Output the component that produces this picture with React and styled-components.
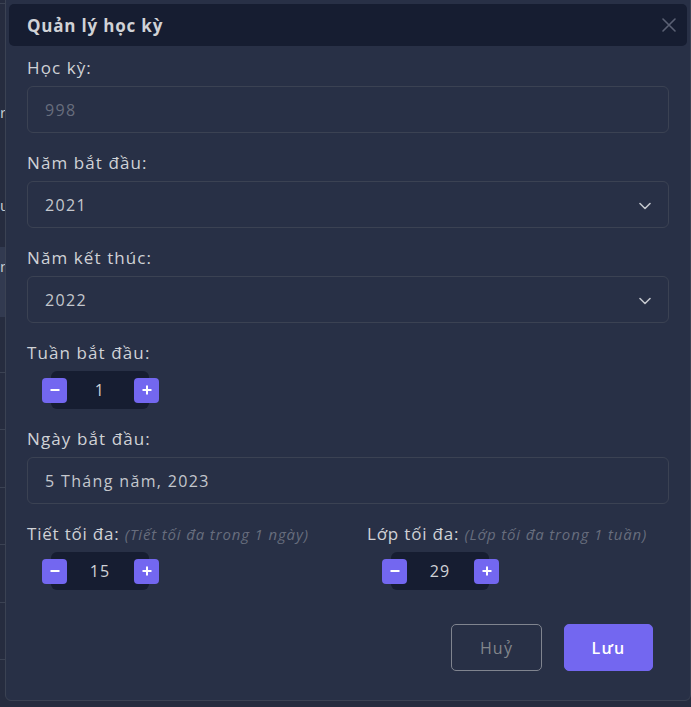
import React, { useState } from 'react';
import styled, { createGlobalStyle } from 'styled-components';

const GlobalStyle = createGlobalStyle`
  html, body {
    margin: 0;
    padding: 0;
    background: #262c3f;
    font-family: "Open Sans", "Liberation Sans", sans-serif;
    overflow: hidden;
  }
  * { box-sizing: border-box; }
`;

// rows of the page that sits behind the dialog (only a sliver shows on the left)
const bgRows = [
  { h: 4, line: true },
  { h: 87 },
  { h: 42, text: 'r' },
  { h: 51 },
  { h: 42, text: 'ư' },
  { h: 21 },
  { h: 70, hl: true, text: 'n', top: true },
  { h: 56, line: true },
  { h: 57, line: true },
  { h: 58, line: true },
  { h: 57, line: true },
  { h: 58, line: true },
  { h: 57, line: true },
];

export default function App() {
  const [week, setWeek] = useState(1);
  const [periods, setPeriods] = useState(15);
  const [classes, setClasses] = useState(29);

  return (<>
    <GlobalStyle />
    <Page>
      {bgRows.map((r, i) => (
        <BgRow key={i} $h={r.h} $hl={r.hl} $line={r.line} $top={r.top}>
          {r.text && <BgCell>{r.text}</BgCell>}
        </BgRow>
      ))}
    </Page>

    <Modal>
      <Header>
        <Title>Quản lý học kỳ</Title>
        <Close aria-label="close">
          <svg width="14" height="14" viewBox="0 0 14 14">
            <path d="M1 1L13 13M13 1L1 13" stroke="#5b6174" strokeWidth="1.6" strokeLinecap="round" />
          </svg>
        </Close>
      </Header>

      <Body>
        <Field>
          <Label>Học kỳ:</Label>
          <Box $muted>998</Box>
        </Field>

        <Field>
          <Label>Năm bắt đầu:</Label>
          <Box>
            2021
            <Chevron />
          </Box>
        </Field>

        <Field>
          <Label>Năm kết thúc:</Label>
          <Box>
            2022
            <Chevron />
          </Box>
        </Field>

        <Field>
          <Label>Tuần bắt đầu:</Label>
          <Stepper value={week} onChange={setWeek} />
        </Field>

        <Field>
          <Label>Ngày bắt đầu:</Label>
          <Box>5 Tháng năm, 2023</Box>
        </Field>

        <Columns>
          <Field>
            <Label $tight>Tiết tối đa: <Hint>(Tiết tối đa trong 1 ngày)</Hint></Label>
            <Stepper value={periods} onChange={setPeriods} />
          </Field>
          <Field>
            <Label $tight>Lớp tối đa: <Hint>(Lớp tối đa trong 1 tuần)</Hint></Label>
            <Stepper value={classes} onChange={setClasses} />
          </Field>
        </Columns>

        <Footer>
          <Button $outline>Huỷ</Button>
          <Button>Lưu</Button>
        </Footer>
      </Body>
    </Modal>
  </>
  );
};

function Chevron() {
  return (
    <ChevronIcon width="12" height="8" viewBox="0 0 12 8">
      <path d="M1 1.5L6 6.5L11 1.5" fill="none" stroke="#c3c6cc" strokeWidth="1.6" strokeLinecap="round" strokeLinejoin="round" />
    </ChevronIcon>
  );
}

function Stepper({ value, onChange }) {
  return (
    <StepperWrap>
      <StepBtn onClick={() => onChange(value - 1)}>
        <svg width="12" height="12" viewBox="0 0 12 12">
          <path d="M1.5 6H10.5" stroke="#fff" strokeWidth="2" />
        </svg>
      </StepBtn>
      <StepValue>{value}</StepValue>
      <StepBtn onClick={() => onChange(value + 1)}>
        <svg width="12" height="12" viewBox="0 0 12 12">
          <path d="M1.5 6H10.5M6 1.5V10.5" stroke="#fff" strokeWidth="2" />
        </svg>
      </StepBtn>
    </StepperWrap>
  );
}

const Page = styled.div`
  width: 100%;
  height: 707px;
  overflow: hidden;
`;

const BgRow = styled.div`
  height: ${(p) => p.$h}px;
  background: ${(p) => (p.$hl ? '#323a50' : 'transparent')};
  border-bottom: ${(p) => (p.$line ? '1px solid #3b4253' : 'none')};
  display: flex;
  align-items: ${(p) => (p.$top ? 'flex-start' : 'center')};
  padding-top: ${(p) => (p.$top ? '9px' : '0')};
`;

const BgCell = styled.div`
  color: #c9ccd2;
  font-size: 15px;
  line-height: 20px;
`;

const Modal = styled.div`
  position: absolute;
  left: 5px;
  top: -8px;
  width: 686px;
  height: 709px;
  padding: 11px 3px 0;
  background: #283046;
  border: 1px solid #3b4253;
  border-radius: 6px;
  letter-spacing: 1.2px;
`;

const Header = styled.div`
  height: 42px;
  background: #161d31;
  border-radius: 5px;
  display: flex;
  align-items: center;
  justify-content: space-between;
  padding: 0 11px 0 18px;
`;

const Title = styled.h5`
  margin: 0;
  color: #d0d2d6;
  font-size: 17px;
  font-weight: 700;
  letter-spacing: 0.8px;
`;

const Close = styled.button`
  background: none;
  border: 0;
  padding: 0;
  display: flex;
  cursor: pointer;
`;

const Body = styled.div`
  padding: 10px 18px 0;
`;

const Field = styled.div`
  margin-bottom: 18px;
`;

const Label = styled.div`
  color: #d0d2d6;
  font-size: 17px;
  line-height: 24px;
  letter-spacing: ${(p) => (p.$tight ? '0.8px' : '1.1px')};
  margin-bottom: 6px;
  white-space: nowrap;
`;

const Hint = styled.span`
  color: #676d7d;
  font-size: 15px;
  font-style: italic;
  letter-spacing: 0.85px;
`;

const Box = styled.div`
  height: 47px;
  border: 1px solid #3b4253;
  border-radius: 6px;
  display: flex;
  align-items: center;
  justify-content: space-between;
  padding: 0 17px 0 17px;
  color: ${(p) => (p.$muted ? '#676d7d' : '#c4c7cd')};
  font-size: 16px;
  letter-spacing: 1.35px;
`;

const ChevronIcon = styled.svg`
  display: block;
  margin-top: 2px;
`;

const StepperWrap = styled.div`
  display: inline-flex;
  align-items: center;
  margin-left: 15px;
  height: 38px;
`;

const StepBtn = styled.button`
  position: relative;
  z-index: 1;
  width: 25px;
  height: 25px;
  border: 0;
  padding: 0;
  border-radius: 4px;
  background: #7367f0;
  display: flex;
  align-items: center;
  justify-content: center;
  cursor: pointer;
`;

const StepValue = styled.div`
  width: 98px;
  height: 38px;
  margin: 0 -15px 0 -16px;
  background: #161d31;
  border-radius: 6px;
  display: flex;
  align-items: center;
  justify-content: center;
  color: #d0d2d6;
  font-size: 16px;
`;

const Columns = styled.div`
  display: grid;
  grid-template-columns: 1fr 1fr;
  column-gap: 38px;
`;

const Footer = styled.div`
  display: flex;
  justify-content: flex-end;
  gap: 22px;
  padding: 16px 16px 0 0;
`;

const Button = styled.button`
  width: ${(p) => (p.$outline ? '91px' : '89px')};
  height: 47px;
  border-radius: 5px;
  border: 1px solid ${(p) => (p.$outline ? '#80848f' : '#7367f0')};
  background: ${(p) => (p.$outline ? 'transparent' : '#7367f0')};
  color: ${(p) => (p.$outline ? '#82868b' : '#ffffff')};
  font-family: inherit;
  font-size: 16px;
  letter-spacing: 1.2px;
  font-weight: ${(p) => (p.$outline ? 400 : 600)};
  cursor: pointer;
`;
